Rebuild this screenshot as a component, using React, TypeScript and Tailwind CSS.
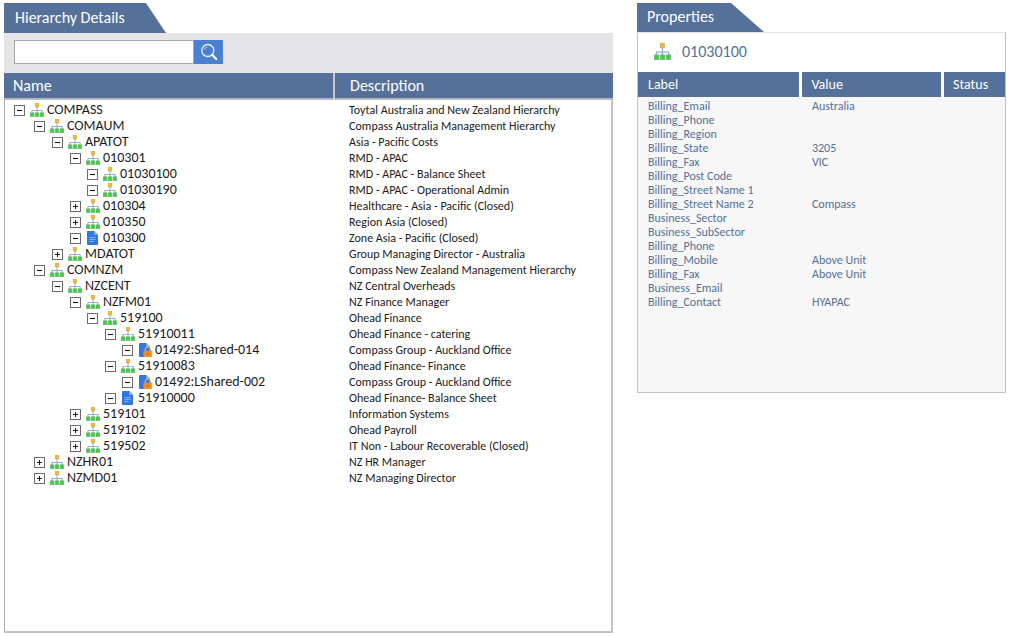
import React from "react";

type Kind = "org" | "doc" | "locked";

interface TreeRow {
  level: number;
  open: boolean;
  kind: Kind;
  name: string;
  description: string;
}

const rows: TreeRow[] = [
  { level: 0, open: true, kind: "org", name: "COMPASS", description: "Toytal Australia and New Zealand Hierarchy" },
  { level: 1, open: true, kind: "org", name: "COMAUM", description: "Compass Australia Management Hierarchy" },
  { level: 2, open: true, kind: "org", name: "APATOT", description: "Asia - Pacific Costs" },
  { level: 3, open: true, kind: "org", name: "010301", description: "RMD - APAC" },
  { level: 4, open: true, kind: "org", name: "01030100", description: "RMD - APAC - Balance Sheet" },
  { level: 4, open: true, kind: "org", name: "01030190", description: "RMD - APAC - Operational Admin" },
  { level: 3, open: false, kind: "org", name: "010304", description: "Healthcare - Asia - Pacific (Closed)" },
  { level: 3, open: false, kind: "org", name: "010350", description: "Region Asia (Closed)" },
  { level: 3, open: true, kind: "doc", name: "010300", description: "Zone Asia - Pacific (Closed)" },
  { level: 2, open: false, kind: "org", name: "MDATOT", description: "Group Managing Director - Australia" },
  { level: 1, open: true, kind: "org", name: "COMNZM", description: "Compass New Zealand Management Hierarchy" },
  { level: 2, open: true, kind: "org", name: "NZCENT", description: "NZ Central Overheads" },
  { level: 3, open: true, kind: "org", name: "NZFM01", description: "NZ Finance Manager" },
  { level: 4, open: true, kind: "org", name: "519100", description: "Ohead Finance" },
  { level: 5, open: true, kind: "org", name: "51910011", description: "Ohead Finance - catering" },
  { level: 6, open: true, kind: "locked", name: "01492:Shared-014", description: "Compass Group - Auckland Office" },
  { level: 5, open: true, kind: "org", name: "51910083", description: "Ohead Finance- Finance" },
  { level: 6, open: true, kind: "locked", name: "01492:LShared-002", description: "Compass Group - Auckland Office" },
  { level: 5, open: true, kind: "doc", name: "51910000", description: "Ohead Finance- Balance Sheet" },
  { level: 3, open: false, kind: "org", name: "519101", description: "Information Systems" },
  { level: 3, open: false, kind: "org", name: "519102", description: "Ohead Payroll" },
  { level: 3, open: false, kind: "org", name: "519502", description: "IT Non - Labour Recoverable (Closed)" },
  { level: 1, open: false, kind: "org", name: "NZHR01", description: "NZ HR Manager" },
  { level: 1, open: false, kind: "org", name: "NZMD01", description: "NZ Managing Director" },
];

const indents = ["pl-[10px]", "pl-[30px]", "pl-[48px]", "pl-[66px]", "pl-[83px]", "pl-[101px]", "pl-[118px]"];

const properties: [string, string][] = [
  ["Billing_Email", "Australia"],
  ["Billing_Phone", ""],
  ["Billing_Region", ""],
  ["Billing_State", "3205"],
  ["Billing_Fax", "VIC"],
  ["Billing_Post Code", ""],
  ["Billing_Street Name 1", ""],
  ["Billing_Street Name 2", "Compass"],
  ["Business_Sector", ""],
  ["Business_SubSector", ""],
  ["Billing_Phone", ""],
  ["Billing_Mobile", "Above Unit"],
  ["Billing_Fax", "Above Unit"],
  ["Business_Email", ""],
  ["Billing_Contact", "HYAPAC"],
];

function OrgIcon({ className }: { className: string }) {
  return (
    <svg className={className} viewBox="0 0 14 14" aria-hidden="true">
      <path d="M7 4v6M2 10V7.5h10V10" fill="none" stroke="#9db0cf" strokeWidth="1.1" />
      <rect x="5.2" y="0.2" width="3.6" height="3.8" fill="#fdb90c" stroke="#b5a57e" strokeWidth="0.5" />
      <rect x="0.2" y="9.8" width="3.8" height="4" fill="#3cd52c" stroke="#7ba5a0" strokeWidth="0.5" />
      <rect x="5.1" y="9.8" width="3.8" height="4" fill="#3cd52c" stroke="#7ba5a0" strokeWidth="0.5" />
      <rect x="10" y="9.8" width="3.8" height="4" fill="#3cd52c" stroke="#7ba5a0" strokeWidth="0.5" />
    </svg>
  );
}

function DocIcon({ locked }: { locked: boolean }) {
  return (
    <svg className="h-3.5 w-3.5 shrink-0" viewBox="0 0 14 14" aria-hidden="true">
      <path d="M1 0.8Q1 0 1.8 0H8.3L12 3.7V13.2Q12 14 11.2 14H1.8Q1 14 1 13.2Z" fill="#2f78e4" />
      <path d="M8.3 0L12 3.7H8.3Z" fill="#9cc0f5" />
      {locked ? (
        <>
          <path d="M7.3 8.4V6.6a2.4 2.4 0 0 1 4.8 0v1.8" fill="none" stroke="#f6a04a" strokeWidth="1.2" />
          <rect x="5.4" y="7.8" width="8.4" height="6.2" rx="0.6" fill="#fb8c17" />
          <circle cx="9.6" cy="10.8" r="0.9" fill="#a85f1c" />
        </>
      ) : (
        <path d="M3.4 6.6H9.6M3.4 8.6H9.6M3.4 10.6H7.6" stroke="#93bbf4" strokeWidth="0.9" />
      )}
    </svg>
  );
}

function Toggle({ open, name }: { open: boolean; name: string }) {
  return (
    <button type="button" aria-expanded={open} aria-label={`Toggle ${name}`} className="h-[11px] w-[11px] shrink-0">
      <svg viewBox="0 0 11 11" className="h-full w-full" aria-hidden="true">
        <rect x="0.5" y="0.5" width="10" height="10" fill="#fff" stroke="#6c6c6c" />
        <path d={open ? "M3 5.5H8" : "M3 5.5H8M5.5 3V8"} stroke="#1a1a1a" strokeWidth="1.1" />
      </svg>
    </button>
  );
}

function SearchIcon() {
  return (
    <svg className="h-[18px] w-[18px]" viewBox="0 0 18 18" fill="none" aria-hidden="true">
      <circle cx="7.8" cy="7.5" r="6" stroke="#eaf2ff" strokeWidth="1.3" />
      <path d="M4.4 7A3.4 3.4 0 0 1 7.5 4" stroke="#a9c4ee" strokeWidth="1" />
      <path d="M12 11.8L16.2 16" stroke="#fff" strokeWidth="2.2" strokeLinecap="round" />
    </svg>
  );
}

export default function App() {
  return (
    <main className="grid min-h-screen grid-cols-[609fr_369fr] gap-6 bg-white px-1 pt-[3px] pb-[3px] font-['Carlito','Lato',sans-serif] text-[#1c1c1c]">
      <section className="flex flex-col">
        <h2 className="h-[30px] w-[162px] bg-[#557199] pl-[11px] text-[16px] leading-[30px] text-white [clip-path:polygon(0_0,142px_0,100%_100%,0_100%)]">
          Hierarchy Details
        </h2>
        <form className="flex h-10 items-center bg-[#e5e5e7] px-2.5" onSubmit={(e) => e.preventDefault()}>
          <input
            type="search"
            aria-label="Search hierarchy"
            className="mb-0.5 h-6 w-[180px] border border-[#a6a6a6] bg-white px-1 text-[13px] outline-none"
          />
          <button type="submit" aria-label="Search" className="mb-0.5 flex h-6 w-[29px] items-center justify-center bg-[#4a80cf]">
            <SearchIcon />
          </button>
        </form>
        <div className="grow border-2 border-t-0 border-[#c2c2c2] border-l-[#a9a9a9] [border-left-width:1px]">
          <table className="-mr-0.5 -ml-px w-[calc(100%+3px)] table-fixed border-collapse text-left">
            <colgroup>
              <col className="w-[54.2%]" />
              <col />
            </colgroup>
            <thead>
              <tr className="h-[26px] border-b-2 border-[#b5b8bd] bg-[#557199] text-[16px] leading-6 text-white">
                <th className="border-r-2 border-[#c8c8c8] p-0 pl-[9px] font-normal">Name</th>
                <th className="p-0 pl-[15px] font-normal">Description</th>
              </tr>
            </thead>
            <tbody className="before:block before:h-0.5">
              {rows.map((row) => (
                <tr key={row.name} className="h-4">
                  <td className="p-0">
                    <div className={`flex h-4 items-center ${indents[row.level]}`}>
                      <Toggle open={row.open} name={row.name} />
                      <span className="mr-[3px] ml-[5px] flex">
                        {row.kind === "org" ? <OrgIcon className="h-3.5 w-3.5" /> : <DocIcon locked={row.kind === "locked"} />}
                      </span>
                      <span className="text-[14px] leading-4">{row.name}</span>
                    </div>
                  </td>
                  <td className="p-0 pl-[15px] text-[12px] leading-4">{row.description}</td>
                </tr>
              ))}
            </tbody>
          </table>
        </div>
      </section>

      <section className="text-[#557199]">
        <h2 className="h-[29px] w-[127px] bg-[#557199] pl-2.5 text-[16px] leading-7 text-white [clip-path:polygon(0_0,94px_0,100%_100%,0_100%)]">
          Properties
        </h2>
        <div className="min-h-[361px] border border-[#c2c2c2] border-t-[#e4e4e4] bg-[#f7f7f7]">
          <div className="flex h-[39px] items-center bg-white pb-0.5 pl-4">
            <OrgIcon className="h-[17px] w-[17px]" />
            <span className="ml-[11px] text-[16px] leading-5">01030100</span>
          </div>
          <table className="w-full table-fixed border-collapse text-left">
            <colgroup>
              <col className="w-[44.4%]" />
              <col className="w-[38.6%]" />
              <col />
            </colgroup>
            <thead>
              <tr className="h-[25px] bg-[#557199] text-[14px] leading-5 text-white">
                <th className="border-r-3 border-white p-0 pl-2.5 font-normal">Label</th>
                <th className="border-r-3 border-white p-0 pl-[9px] font-normal">Value</th>
                <th className="p-0 pl-[9px] font-normal">Status</th>
              </tr>
            </thead>
            <tbody className="before:block before:h-0.5">
              {properties.map(([label, value], i) => (
                <tr key={i} className="h-3.5 text-[12px] leading-3.5">
                  <td className="p-0 pl-2.5">{label}</td>
                  <td className="p-0 pl-[11px]">{value}</td>
                  <td className="p-0" />
                </tr>
              ))}
            </tbody>
          </table>
        </div>
      </section>
    </main>
  );
}
